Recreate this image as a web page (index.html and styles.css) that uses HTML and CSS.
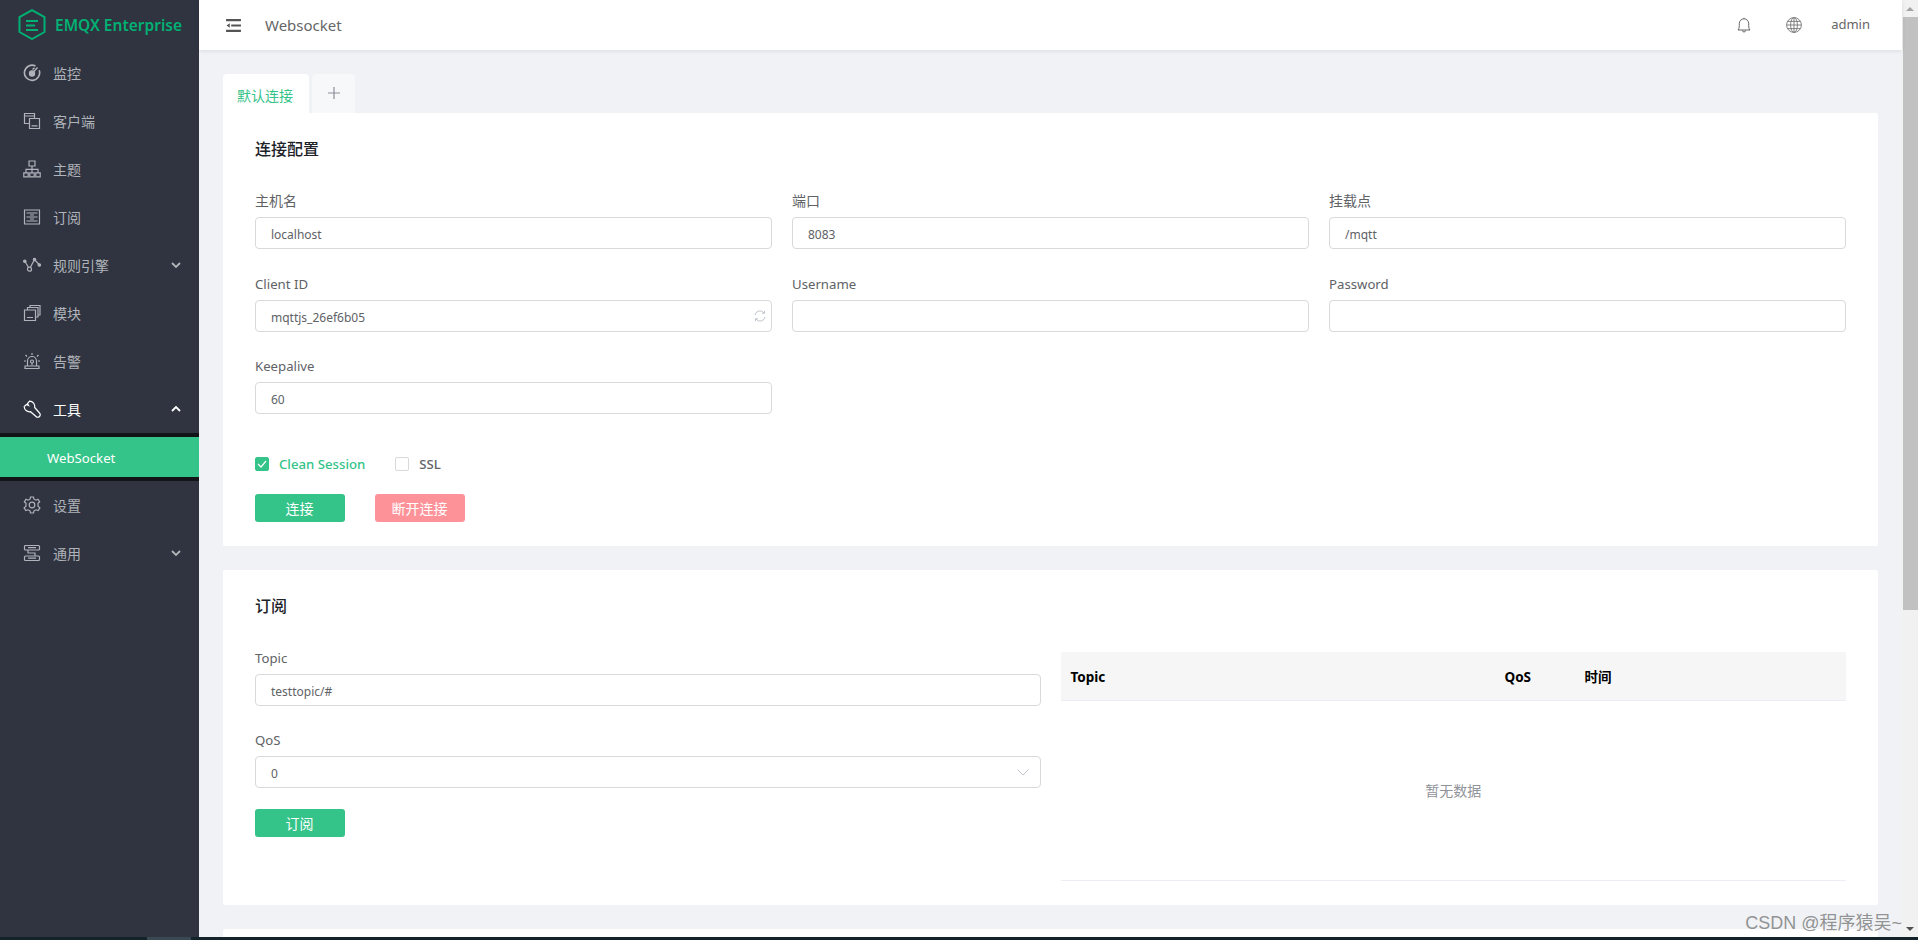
FILE: index.html
```html
<!DOCTYPE html>
<html lang="zh-CN">
<head>
	<meta charset="UTF-8">
	<title>Websocket</title>
	<link rel="stylesheet" href="styles.css">
</head>
<body>
	<div class="app">
		<aside class="sidebar">
			<div class="logo">
				<svg class="logo-mark" width="28" height="31" viewBox="0 0 28 31" fill="none" stroke="#00b173" stroke-width="2">
					<path d="M14 1.2 L26.5 8 V23 L14 30 L1.5 23 V8 Z"/>
					<path d="M8 12 H20 M8 16.5 H17 M8 21 H20" stroke-width="2"/>
				</svg>
				<span class="logo-text">EMQX Enterprise</span>
			</div>
			<ul class="menu">
				<li class="menu-item">
					<svg class="menu-icon" viewBox="0 0 18 18" fill="none" stroke="currentColor"><path d="M12.5 2 A7.6 7.6 0 1 0 16.2 6.2" stroke-width="1.6"/><circle cx="9" cy="9.5" r="2.6" fill="currentColor"/><path d="M9 9.5 L14.5 3.5 M11.5 3.8 L9.5 5.6" stroke-width="1.4"/></svg>
					<span>监控</span>
				</li>
				<li class="menu-item">
					<svg class="menu-icon" viewBox="0 0 18 18" fill="none" stroke="currentColor"><path d="M6 11.5 H1.5 V1.5 H11.5 V6 M1.5 4 H11.5"/><path d="M6.5 6.5 H16.5 V16.5 H6.5 Z M8.5 13.8 H14.5"/></svg>
					<span>客户端</span>
				</li>
				<li class="menu-item">
					<svg class="menu-icon" viewBox="0 0 18 18" fill="none" stroke="currentColor"><path d="M6 1 H12 V6 H6 Z M.8 12.8 H5.2 V16.8 H.8 Z M6.8 12.8 H11.2 V16.8 H6.8 Z M12.8 12.8 H17.2 V16.8 H12.8 Z M3 12.8 V9.4 H15 V12.8 M9 6 V12.8"/></svg>
					<span>主题</span>
				</li>
				<li class="menu-item">
					<svg class="menu-icon" viewBox="0 0 18 18" fill="none" stroke="currentColor"><path d="M1.5 2 H16.5 V16 H1.5 Z M3.5 5 H14.5 M3.5 9 H14.5 M3.5 13 H14.5 M7 7 H11 M7 11 H11"/></svg>
					<span>订阅</span>
				</li>
				<li class="menu-item">
					<svg class="menu-icon" viewBox="0 0 18 18" fill="none" stroke="currentColor" stroke-width="1.5"><path d="M2 5.5 L6.5 13 L11.5 3.5 L16.5 9"/><circle cx="1.8" cy="5.2" r="1.2" fill="currentColor"/><circle cx="6.5" cy="13.2" r="2" fill="#2f3440"/><circle cx="11.5" cy="3.5" r="1.2" fill="currentColor"/><circle cx="16.3" cy="9" r="1.2" fill="currentColor"/></svg>
					<span>规则引擎</span>
					<svg class="menu-arrow" viewBox="0 0 10 6" fill="none" stroke="currentColor" stroke-width="1.8"><path d="M1 1 L5 5 L9 1"/></svg>
				</li>
				<li class="menu-item">
					<svg class="menu-icon" viewBox="0 0 18 18" fill="none" stroke="currentColor"><path d="M1.5 6 H12.5 V16.5 H1.5 Z M4 13.5 H10 M4.5 6 V3.5 H15 V13 H12.5 M7 3.5 V1.5 H17 V11 H15"/></svg>
					<span>模块</span>
				</li>
				<li class="menu-item">
					<svg class="menu-icon" viewBox="0 0 18 18" fill="none" stroke="currentColor"><path d="M4.5 13.5 V9 A4.5 4.5 0 0 1 13.5 9 V13.5 M2 14 H16 V16.5 H2 Z M9 1 V3 M2.5 3 L4 4.5 M15.5 3 L14 4.5 M1 9 H3 M15 9 H17"/><circle cx="9" cy="9.5" r="1.5"/><path d="M9 11 V13.5"/></svg>
					<span>告警</span>
				</li>
				<li class="menu-item is-open">
					<svg class="menu-icon" viewBox="0 0 18 18" fill="none" stroke="currentColor"><path d="M6.5 1.2 L4.5 3.5 L5.5 5.5 L3.5 4.5 L1.2 6.5 A5.3 5.3 0 0 0 7.5 11.7 L13 16.5 A2.1 2.1 0 0 0 16.5 13 L11.7 7.5 A5.3 5.3 0 0 0 6.5 1.2 Z"/></svg>
					<span>工具</span>
					<svg class="menu-arrow" viewBox="0 0 10 6" fill="none" stroke="currentColor" stroke-width="1.8"><path d="M1 5 L5 1 L9 5"/></svg>
				</li>
				<li class="submenu"><div class="submenu-item">WebSocket</div></li>
				<li class="menu-item">
					<svg class="menu-icon" viewBox="0 0 18 18" fill="none" stroke="currentColor"><path d="M7.5 1 H10.5 L11 3.2 L13 4.2 L15 3.2 L16.7 5.8 L15 7.3 V10.2 L16.9 11.8 L15.2 14.6 L13 13.8 L11 14.8 L10.5 17 H7.5 L7 14.8 L5 13.8 L2.8 14.6 L1.1 11.8 L3 10.2 V7.3 L1.3 5.8 L3 3.2 L5 4.2 L7 3.2 Z"/><circle cx="9" cy="9" r="2.8"/></svg>
					<span>设置</span>
				</li>
				<li class="menu-item">
					<svg class="menu-icon" viewBox="0 0 18 18" fill="none" stroke="currentColor"><rect x="1.5" y="1.5" width="15" height="4.5" rx="1"/><rect x="1.5" y="12" width="15" height="4.5" rx="1"/><path d="M5 6 V9 H12 V12 M5 3.7 H13 M5 14.2 H13"/></svg>
					<span>通用</span>
					<svg class="menu-arrow" viewBox="0 0 10 6" fill="none" stroke="currentColor" stroke-width="1.8"><path d="M1 1 L5 5 L9 1"/></svg>
				</li>
			</ul>
		</aside>

		<div class="main">
			<header class="topbar">
				<svg class="fold-icon" width="15" height="13" viewBox="0 0 16 14" fill="#555"><path d="M0 0 H16 V2.4 H0 Z M5.5 5.8 H16 V8.2 H5.5 Z M0 11.6 H16 V14 H0 Z M4 4.6 V9.4 L0.5 7 Z"/></svg>
				<span class="page-title">Websocket</span>
				<div class="topbar-right">
					<svg width="14" height="16" viewBox="0 0 14 16" fill="none" stroke="#666"><path d="M1 13 C2.5 11.5 2.3 9 2.3 6.5 A4.7 4.7 0 0 1 11.7 6.5 C11.7 9 11.5 11.5 13 13 Z M5.5 13.5 A1.5 1.5 0 0 0 8.5 13.5 M7 1.8 V0.8"/></svg>
					<svg class="globe" width="16" height="16" viewBox="0 0 16 16" fill="none" stroke="#777" stroke-width=".9"><circle cx="8" cy="8" r="7.4"/><ellipse cx="8" cy="8" rx="3.4" ry="7.4"/><path d="M8 .6 V15.4 M.6 8 H15.4 M1.6 4.4 H14.4 M1.6 11.6 H14.4"/></svg>
					<span class="user">admin</span>
				</div>
			</header>

			<div class="content">
				<div class="tabs">
					<div class="tab is-active">默认连接</div>
					<div class="tab tab-add">
						<svg width="12" height="12" viewBox="0 0 12 12" stroke="#8a8f99" stroke-width="1.2"><path d="M6 0 V12 M0 6 H12"/></svg>
					</div>
				</div>

				<section class="card card-first">
					<h3 class="card-title">连接配置</h3>
					<div class="grid-3">
						<div class="field">
							<label>主机名</label>
							<div class="input">localhost</div>
						</div>
						<div class="field">
							<label>端口</label>
							<div class="input">8083</div>
						</div>
						<div class="field">
							<label>挂载点</label>
							<div class="input">/mqtt</div>
						</div>
						<div class="field">
							<label class="latin">Client ID</label>
							<div class="input">
								mqttjs_26ef6b05
								<svg class="input-icon" width="12" height="12" viewBox="0 0 12 12" fill="none" stroke="#c0c4cc"><path d="M1 5 A5 5 0 0 1 10 3 M10.5 0.8 V3.3 H8 M11 7 A5 5 0 0 1 2 9 M1.5 11.2 V8.7 H4"/></svg>
							</div>
						</div>
						<div class="field">
							<label class="latin">Username</label>
							<div class="input"></div>
						</div>
						<div class="field">
							<label class="latin">Password</label>
							<div class="input"></div>
						</div>
						<div class="field">
							<label class="latin">Keepalive</label>
							<div class="input">60</div>
						</div>
					</div>
					<div class="checks">
						<div class="check is-checked">
							<span class="box">
								<svg width="10" height="8" viewBox="0 0 10 8" fill="none" stroke="#fff" stroke-width="1.2"><path d="M1 4 L4 7 L9 1"/></svg>
							</span>
							<span class="check-text">Clean Session</span>
						</div>
						<div class="check">
							<span class="box"></span>
							<span class="check-text">SSL</span>
						</div>
					</div>
					<div class="buttons">
						<button type="button" class="btn btn-green">连接</button>
						<button type="button" class="btn btn-pink">断开连接</button>
					</div>
				</section>

				<section class="card">
					<h3 class="card-title">订阅</h3>
					<div class="grid-2">
						<div class="sub-form">
							<div class="field">
								<label class="latin">Topic</label>
								<div class="input">testtopic/#</div>
							</div>
							<div class="field">
								<label class="latin">QoS</label>
								<div class="input">
									0
									<svg class="input-icon" width="12" height="7" viewBox="0 0 12 7" fill="none" stroke="#c0c4cc"><path d="M.5 .5 L6 6 L11.5 .5"/></svg>
								</div>
							</div>
							<button type="button" class="btn btn-green">订阅</button>
						</div>
						<div class="table">
							<div class="table-head">
								<span class="col-topic">Topic</span>
								<span class="col-qos">QoS</span>
								<span>时间</span>
							</div>
							<div class="table-empty">暂无数据</div>
						</div>
					</div>
				</section>

				<section class="card"></section>
			</div>
		</div>

		<div class="scrollbar">
			<div class="scroll-btn"><i class="arrow-up"></i></div>
			<div class="scroll-thumb"></div>
			<div class="scroll-track"></div>
			<div class="scroll-btn"><i class="arrow-down"></i></div>
		</div>
	</div>

	<div class="taskbar">
		<div class="task-tab"></div>
	</div>

	<div class="watermark">CSDN @程序猿吴~</div>
</body>
</html>
```

FILE: styles.css
```css
* { box-sizing: border-box; }
html, body { height: 100%; }
body { margin: 0; overflow: hidden; display: flex; flex-direction: column; position: relative; background: #f0f2f5; color: #606266; font: 14px/1.5 "Noto Sans", "Noto Sans CJK SC", sans-serif; }
ul { margin: 0; padding: 0; list-style: none; }

.app { flex: 1; min-height: 0; display: flex; }
.taskbar { flex: none; height: 3px; background: #14232a; padding-left: 147px; }
.task-tab { width: 44px; height: 3px; background: #3a4a52; }

/* sidebar */
.sidebar { flex: none; width: 199px; background: #2f3440; color: #b0b3b9; }
.logo { height: 49px; display: flex; align-items: center; padding-left: 18px; }
.logo-mark { flex: none; }
.logo-text { margin-left: 9px; color: #00b173; font: 600 15.5px "Noto Sans", sans-serif; white-space: nowrap; }
.menu-item { height: 48px; display: flex; align-items: center; padding-left: 23px; padding-right: 18px; }
.menu-item.is-open { color: #fff; }
.menu-icon { flex: none; width: 18px; height: 18px; margin-right: 12px; stroke-width: 1.2; }
.menu-arrow { width: 10px; height: 6px; margin-left: auto; }
.submenu { background: #121417; padding: 4px 0; height: 48px; }
.submenu-item { height: 40px; line-height: 42px; padding-left: 47px; background: #34c388; color: #fff; font-size: 13.2px; }

/* top bar */
.main { flex: 1; min-width: 0; display: flex; flex-direction: column; }
.topbar { flex: none; height: 50px; display: flex; align-items: center; padding: 0 32px 0 27px; background: #fff; box-shadow: 0 1px 4px rgba(0,21,41,.1); position: relative; }
.page-title { margin-left: 24px; font-size: 15px; color: #666; }
.topbar-right { margin-left: auto; display: flex; align-items: center; }
.globe { margin-left: 35px; }
.user { margin-left: 29px; font-size: 13px; color: #666; }

/* content */
.content { flex: 1; min-height: 0; overflow: hidden; padding: 24px 24px 0; }
.tabs { display: flex; gap: 3px; height: 39px; }
.tab { width: 86px; padding-right: 2px; border-radius: 4px 4px 0 0; background: #fff; color: #34c388; font-size: 14px; line-height: 43px; text-align: center; }
.tab-add { width: 43px; padding-right: 0; padding-bottom: 1px; background: #f7f8fa; display: flex; align-items: center; justify-content: center; }
.card { background: #fff; border-radius: 2px; padding: 24px 32px; margin-bottom: 24px; }
.card-first { border-top-left-radius: 0; }
.card-title { margin: 0 0 28px; font-size: 16px; font-weight: 500; line-height: 24px; color: #202228; }

.grid-3 { display: grid; grid-template-columns: repeat(3, 1fr); gap: 22.5px 20px; }
.grid-2 { display: grid; grid-template-columns: repeat(2, 1fr); gap: 20px; }
.field label { display: block; line-height: 24px; margin-bottom: 4px; font-size: 14px; }
.field label.latin { font-size: 13.2px; }
.input { position: relative; height: 32px; line-height: 33px; padding-left: 15px; border: 1px solid #d9d9d9; border-radius: 4px; background: #fff; font-size: 12px; }
.input-icon { position: absolute; right: 5px; top: 9px; }
.field .input-icon[height="7"] { right: 11px; top: 12px; }

.checks { display: flex; gap: 30px; margin-top: 39.5px; height: 20px; }
.check { display: flex; align-items: center; gap: 10px; font-size: 13.2px; font-weight: 500; }
.check-text { position: relative; top: 1px; }
.check.is-checked { color: #34c388; }
.box { width: 14px; height: 14px; border: 1px solid #d9d9d9; border-radius: 2px; display: flex; align-items: center; justify-content: center; background: #fff; }
.is-checked .box { background: #34c388; border-color: #34c388; }
.buttons { display: flex; gap: 30px; margin-top: 20px; }
.btn { width: 90px; height: 28px; padding: 0 1px 0 0; border: none; border-radius: 3px; color: #fff; font: 14px "Noto Sans", "Noto Sans CJK SC", sans-serif; }
.btn-green { background: #34c388; }
.btn-pink { background: #fe9299; }

.sub-form { display: flex; flex-direction: column; gap: 22px; }
.sub-form .btn { margin-top: -1px; }
.table { margin-top: 6px; height: 229px; border-bottom: 1px solid #ebeef5; display: flex; flex-direction: column; }
.table-head { flex: none; height: 49px; display: flex; align-items: center; padding: 3px 0 0 10px; background: #f6f6f6; border-bottom: 1px solid #ebeef5; border-radius: 2px 2px 0 0; color: #000; font-weight: 700; font-size: 13.5px; }
.col-topic { width: 434px; }
.col-qos { width: 80px; }
.table-empty { flex: 1; display: flex; align-items: center; justify-content: center; color: #909399; font-size: 14px; }

/* scrollbar */
.scrollbar { flex: none; width: 16px; display: flex; flex-direction: column; background: #f1f1f1; }
.scroll-btn { flex: none; height: 17px; display: flex; align-items: center; justify-content: center; }
.arrow-up { border: 4px solid transparent; border-top: 0; border-bottom: 4px solid #a3a3a3; }
.arrow-down { border: 4px solid transparent; border-bottom: 0; border-top: 4px solid #505050; }
.scroll-thumb { flex: none; height: 593px; background: #c1c1c1; margin-left: 1px; }
.scroll-track { flex: 1; }

.watermark { position: absolute; right: 16px; bottom: 5px; color: rgba(90,90,90,.65); font: 18px/24px "Liberation Sans", "Noto Sans CJK SC", sans-serif; white-space: nowrap; }
```
